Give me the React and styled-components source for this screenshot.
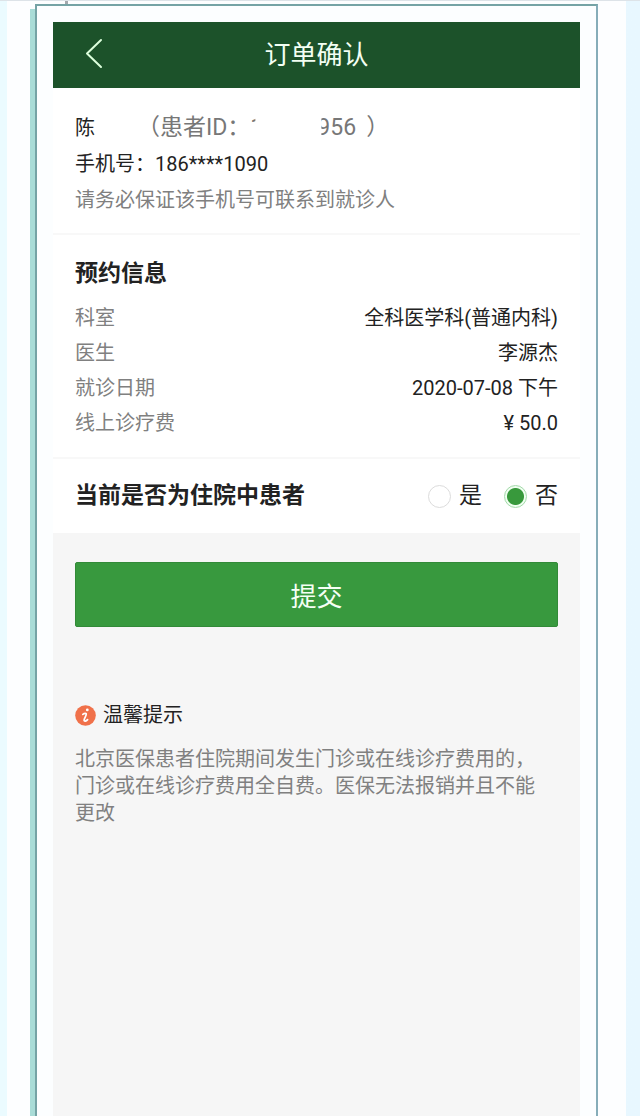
import React, { useState } from "react";
import styled, { createGlobalStyle } from "styled-components";

const GlobalStyle = createGlobalStyle`
  * {
    box-sizing: border-box;
  }
  body {
    margin: 0;
    background: linear-gradient(90deg, #ebfbff, #e8f7ff);
    font-family: Roboto, "Noto Sans CJK SC", sans-serif;
    font-size: 20px;
    color: #222;
  }
  h1, h2, p, dl, dd, fieldset {
    margin: 0;
    padding: 0;
    border: 0;
  }
`;

const Page = styled.div`
  display: flex;
  min-height: 100vh;
  padding: 0 14px 0 7px;
  border-top: 1px solid #dde3e8;
  overflow: hidden;
`;

const Sheet = styled.div`
  position: relative;
  flex: 1;
  display: flex;
  padding: 3px 28px 0;
  background: #fdfeff;
  &::before {
    content: "";
    position: absolute;
    top: 0;
    left: 58px;
    width: 3px;
    height: 3px;
    background: #a3a8ad;
  }
`;

const Frame = styled.div`
  flex: 1;
  display: flex;
  padding: 16px 16px 0;
  border: 2px solid #75a3a5;
  border-right-color: #86adb9;
  border-bottom: 0;
  background: #fcfeff;
  box-shadow: -5px 5px 0 #a9dcd7;
`;

const Screen = styled.main`
  flex: 1;
  min-width: 0;
  background: #f6f6f6;
`;

const Header = styled.header`
  display: grid;
  grid-template-columns: 60px 1fr 60px;
  align-items: center;
  height: 66px;
  padding: 0 11px;
  background: #1c522a;
  color: #f3fff3;
`;

const BackButton = styled.button`
  display: flex;
  justify-content: center;
  padding: 0 0 4px;
  border: 0;
  background: none;
  color: #dcffdc;
  cursor: pointer;
`;

const Title = styled.h1`
  font-size: 26px;
  font-weight: 400;
  line-height: 36px;
  text-align: center;
`;

const Section = styled.section`
  padding: ${(props) => props.$pad};
  background: #fff;
  & + & {
    border-top: 2px solid #f8f8f8;
  }
`;

const PatientLine = styled.p`
  display: flex;
  align-items: center;
  line-height: 36px;
`;

const PatientName = styled.span`
  width: 62px;
`;

const PatientId = styled.span`
  display: flex;
  font-size: 23px;
  color: #777;
`;

const MaskedStart = styled.span`
  width: 67px;
  clip-path: inset(0 62px 24px 0);
`;

const MaskedEnd = styled.span`
  margin-right: 10px;
  clip-path: inset(0 0 0 4px);
`;

const Line = styled.p`
  line-height: 36px;
  color: ${(props) => (props.$muted ? "#808080" : "#222")};
`;

const Heading = styled.h2`
  font-size: 23px;
  font-weight: 700;
  line-height: 36px;
`;

const Details = styled.dl`
  margin-top: 9px;
`;

const DetailRow = styled.div`
  display: flex;
  justify-content: space-between;
  line-height: 35px;
  dt {
    color: #808080;
  }
`;

const Question = styled.fieldset`
  display: flex;
  align-items: center;
  justify-content: space-between;
  min-width: 0;
`;

const Options = styled.div`
  display: flex;
  gap: 22px;
`;

const Option = styled.label`
  display: flex;
  align-items: center;
  gap: 8px;
  font-size: 23px;
  line-height: 36px;
`;

const Radio = styled.input`
  appearance: none;
  width: 23px;
  height: 23px;
  margin: 0;
  border: 1px solid #dcdcdc;
  border-radius: 50%;
  background: #fff;
  &:checked {
    border-color: #a5d9ab;
    background: radial-gradient(circle, #38993c 8px, #effff0 9px);
  }
`;

const Footer = styled.div`
  padding: 29px 22px;
`;

const SubmitButton = styled.button`
  display: block;
  width: 100%;
  height: 65px;
  border: 1px solid #328a38;
  border-radius: 2px;
  background: #38993e;
  color: #f5fff5;
  font-family: inherit;
  font-size: 26px;
  cursor: pointer;
`;

const NoticeTitle = styled.div`
  display: flex;
  align-items: center;
  gap: 7px;
  margin-top: 70px;
  line-height: 36px;
`;

const NoticeText = styled.p`
  margin-top: 13px;
  padding-right: 12px;
  line-height: 27px;
  color: #808080;
`;

const details = [
  { label: "科室", value: "全科医学科(普通内科)" },
  { label: "医生", value: "李源杰" },
  { label: "就诊日期", value: "2020-07-08 下午" },
  { label: "线上诊疗费", value: "¥ 50.0" },
];

const BackIcon = () => (
  <svg width="20" height="32" viewBox="0 0 20 32" fill="none">
    <path
      d="M17 3L3 16.500L17 30"
      stroke="currentColor"
      strokeWidth="2"
      strokeLinecap="round"
      strokeLinejoin="round"
    />
  </svg>
);

const InfoIcon = () => (
  <svg width="21" height="21" viewBox="0 0 21 21" fill="none">
    <circle cx="10.500" cy="10.500" r="10.300" fill="#f0714a" />
    <circle cx="12.300" cy="4.900" r="1.400" fill="#fff" />
    <path
      d="M7.800 9.400C9.500 8 11.600 7.800 11.200 9.600C10.800 11.400 9.200 13.600 9.100 15C9 16.700 11.200 16.200 12.600 14.600"
      stroke="#fff"
      strokeWidth="1.700"
      strokeLinecap="round"
    />
  </svg>
);

export default function App() {
  const [inpatient, setInpatient] = useState("no");

  const handleChange = (event) => {
    setInpatient(event.target.value);
  };

  return (
    <>
      <GlobalStyle />
      <Page>
        <Sheet>
          <Frame>
            <Screen>
              <Header>
                <BackButton type="button" aria-label="返回">
                  <BackIcon />
                </BackButton>
                <Title>订单确认</Title>
              </Header>
              <Section $pad="22px 22px 15px">
                <PatientLine>
                  <PatientName>陈</PatientName>
                  <PatientId>
                    <span>（患者ID：</span>
                    <MaskedStart>1</MaskedStart>
                    <MaskedEnd>956</MaskedEnd>
                    <span>）</span>
                  </PatientId>
                </PatientLine>
                <Line>手机号：186****1090</Line>
                <Line $muted>请务必保证该手机号可联系到就诊人</Line>
              </Section>
              <Section $pad="21px 22px 16px">
                <Heading>预约信息</Heading>
                <Details>
                  {details.map((item) => (
                    <DetailRow key={item.label}>
                      <dt>{item.label}</dt>
                      <dd>{item.value}</dd>
                    </DetailRow>
                  ))}
                </Details>
              </Section>
              <Section $pad="19px 22px 19px">
                <Question aria-labelledby="inpatient-label">
                  <Heading id="inpatient-label">当前是否为住院中患者</Heading>
                  <Options>
                    <Option>
                      <Radio
                        type="radio"
                        name="inpatient"
                        value="yes"
                        checked={inpatient === "yes"}
                        onChange={handleChange}
                      />
                      是
                    </Option>
                    <Option>
                      <Radio
                        type="radio"
                        name="inpatient"
                        value="no"
                        checked={inpatient === "no"}
                        onChange={handleChange}
                      />
                      否
                    </Option>
                  </Options>
                </Question>
              </Section>
              <Footer>
                <SubmitButton type="button">提交</SubmitButton>
                <NoticeTitle>
                  <InfoIcon />
                  温馨提示
                </NoticeTitle>
                <NoticeText>
                  北京医保患者住院期间发生门诊或在线诊疗费用的，门诊或在线诊疗费用全自费。医保无法报销并且不能更改
                </NoticeText>
              </Footer>
            </Screen>
          </Frame>
        </Sheet>
      </Page>
    </>
  );
}
